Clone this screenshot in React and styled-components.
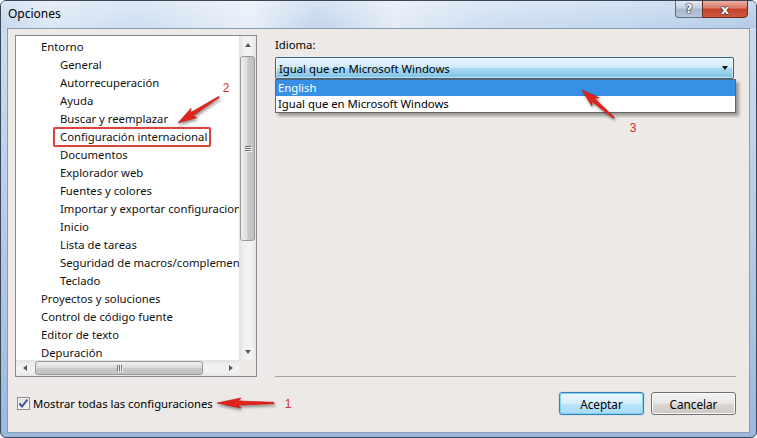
import styled, { createGlobalStyle } from "styled-components";

const GlobalStyle = createGlobalStyle`
  html, body {
    margin: 0;
    padding: 0;
    background: #ffffff;
  }
  body {
    font-family: "Noto Sans", "Open Sans", sans-serif;
    font-size: 11.3px;
    color: #000;
  }
  * {
    box-sizing: border-box;
  }
`;

const TREE = [
  { label: "Entorno", level: 0 },
  { label: "General", level: 1 },
  { label: "Autorrecuperación", level: 1 },
  { label: "Ayuda", level: 1 },
  { label: "Buscar y reemplazar", level: 1 },
  { label: "Configuración internacional", level: 1, marked: true },
  { label: "Documentos", level: 1 },
  { label: "Explorador web", level: 1 },
  { label: "Fuentes y colores", level: 1 },
  { label: "Importar y exportar configuraciones", level: 1 },
  { label: "Inicio", level: 1 },
  { label: "Lista de tareas", level: 1 },
  { label: "Seguridad de macros/complementos", level: 1 },
  { label: "Teclado", level: 1 },
  { label: "Proyectos y soluciones", level: 0 },
  { label: "Control de código fuente", level: 0 },
  { label: "Editor de texto", level: 0 },
  { label: "Depuración", level: 0 },
];

// tapering annotation arrow, tail -> head
const arrowPoints = (x1, y1, x2, y2, head = 18, hw = 5.5) => {
  const len = Math.hypot(x2 - x1, y2 - y1);
  const ux = (x2 - x1) / len;
  const uy = (y2 - y1) / len;
  const px = -uy;
  const py = ux;
  const bx = x2 - ux * head;
  const by = y2 - uy * head;
  const nx = x2 - ux * (head - 3);
  const ny = y2 - uy * (head - 3);
  const pts = [
    [x1 + px * 0.7, y1 + py * 0.7],
    [nx + px * 2, ny + py * 2],
    [bx + px * hw, by + py * hw],
    [x2, y2],
    [bx - px * hw, by - py * hw],
    [nx - px * 2, ny - py * 2],
    [x1 - px * 0.7, y1 - py * 0.7],
  ];
  return pts.map((p) => p.map((v) => v.toFixed(1)).join(",")).join(" ");
};

const App = () => {
  return (
    <>
      <GlobalStyle />
      <Window>
        <TitleBar>
          <Title>Opciones</Title>
          <Caption>
            <HelpButton>?</HelpButton>
            <CloseButton>x</CloseButton>
          </Caption>
        </TitleBar>
        <Client>
          <Main>
            <TreeBox>
              <TreeList>
                {TREE.map((item) => (
                  <TreeRow key={item.label} $level={item.level}>
                    <TreeLabel $marked={item.marked}>{item.label}</TreeLabel>
                  </TreeRow>
                ))}
              </TreeList>
              <VScroll>
                <ScrollButton>
                  <Tri $dir="up" />
                </ScrollButton>
                <VThumb>
                  <Grip $vertical>
                    <i />
                    <i />
                    <i />
                  </Grip>
                </VThumb>
                <ScrollButton $end>
                  <Tri $dir="down" />
                </ScrollButton>
              </VScroll>
              <HScroll>
                <ScrollButton $wide>
                  <Tri $dir="left" />
                </ScrollButton>
                <HThumb>
                  <Grip>
                    <i />
                    <i />
                    <i />
                  </Grip>
                </HThumb>
                <ScrollButton $wide $end>
                  <Tri $dir="right" />
                </ScrollButton>
              </HScroll>
              <Corner />
            </TreeBox>
            <Panel>
              <FieldLabel>Idioma:</FieldLabel>
              <ComboWrap>
                <Combo>
                  <span>Igual que en Microsoft Windows</span>
                  <Tri $dir="down" $dark />
                </Combo>
                <DropList>
                  <Option $selected>English</Option>
                  <Option>Igual que en Microsoft Windows</Option>
                </DropList>
              </ComboWrap>
              <Separator />
            </Panel>
          </Main>
          <Footer>
            <CheckRow>
              <CheckBox>
                <svg width="11" height="11" viewBox="0 0 11 11">
                  <path
                    d="M1.5 5.5 L4 8.5 L9.5 1.5"
                    fill="none"
                    stroke="#3b4f8f"
                    strokeWidth="2"
                  />
                </svg>
              </CheckBox>
              <span>Mostrar todas las configuraciones</span>
            </CheckRow>
            <Buttons>
              <Button $default>Aceptar</Button>
              <Button>Cancelar</Button>
            </Buttons>
          </Footer>
        </Client>
        <Overlay width="757" height="438" viewBox="0 0 757 438">
          <defs>
            <filter id="shadow" x="-20%" y="-50%" width="140%" height="200%">
              <feDropShadow dx="1" dy="2" stdDeviation="1.4" floodColor="#000" floodOpacity="0.45" />
            </filter>
          </defs>
          <g fill="#e2231d" stroke="#b8140f" strokeWidth="0.6" filter="url(#shadow)">
            <polygon points={arrowPoints(274, 403, 217, 403, 24, 5)} />
            <polygon points={arrowPoints(219, 97, 178, 123, 19, 5.5)} />
            <polygon points={arrowPoints(614, 118, 582, 90, 18, 5.5)} />
          </g>
          <g fill="#d8302a" fontSize="12" fontFamily="'Liberation Sans', sans-serif">
            <text x="288" y="408" textAnchor="middle">1</text>
            <text x="226" y="92" textAnchor="middle">2</text>
            <text x="633" y="132" textAnchor="middle">3</text>
          </g>
        </Overlay>
      </Window>
    </>
  );
};

const Window = styled.div`
  position: relative;
  width: 757px;
  height: 438px;
  display: flex;
  flex-direction: column;
  border: 1px solid #3b4656;
  border-radius: 6px;
  background: linear-gradient(180deg, #cddef0 0%, #b4cbe6 55%, #9cb9dd 100%);
  overflow: hidden;
`;

const TitleBar = styled.div`
  height: 27px;
  display: flex;
  align-items: flex-start;
  padding: 0 8px 0 7px;
  background:
    linear-gradient(180deg, rgba(255, 255, 255, 0.3), rgba(255, 255, 255, 0) 100%),
    linear-gradient(
      90deg,
      #c4d8ee 0%,
      #dbe7f5 6%,
      #cddef1 18%,
      #e6eef8 33%,
      #c2d5ec 42%,
      #e2ebf6 52%,
      #cddef1 64%,
      #c3d7ee 82%,
      #b4cbe6 100%
    );
`;

const Title = styled.div`
  font-size: 12px;
  line-height: 26px;
  color: #000;
`;

const Caption = styled.div`
  margin-left: auto;
  display: flex;
  height: 18px;
  margin-top: -1px;
`;

const CaptionButton = styled.div`
  height: 18px;
  display: flex;
  align-items: center;
  justify-content: center;
  color: #fff;
  font-family: "DejaVu Sans", sans-serif;
  font-weight: bold;
  font-size: 12px;
  text-shadow: 0 0 1px #1c2633, 0 0 1px #1c2633, 0 0 2px #1c2633;
`;

const HelpButton = styled(CaptionButton)`
  width: 27px;
  border: 1px solid #5d6b7e;
  border-right: none;
  border-radius: 0 0 0 4px;
  background: linear-gradient(180deg, #e2e9f2 0%, #c4d1df 45%, #a7b8cc 50%, #b8c7d9 100%);
`;

const CloseButton = styled(CaptionButton)`
  width: 46px;
  border: 1px solid #6a2a20;
  border-radius: 0 0 4px 0;
  font-size: 13px;
  background: linear-gradient(180deg, #eab1a4 0%, #d97864 45%, #c5412b 50%, #d2583f 100%);
`;

const Client = styled.div`
  flex: 1;
  margin: 0 6px 4px 6px;
  border: 1px solid #8a9cb2;
  background: #ece9e6;
  padding: 6px 13px 0 7px;
  display: flex;
  flex-direction: column;
`;

const Main = styled.div`
  display: flex;
  gap: 18px;
  height: 342px;
`;

const TreeBox = styled.div`
  width: 242px;
  border: 1px solid #828790;
  background: #fff;
  display: grid;
  grid-template-columns: 1fr 17px;
  grid-template-rows: 1fr 16px;
`;

const TreeList = styled.div`
  overflow: hidden;
  padding-top: 2px;
`;

const TreeRow = styled.div`
  height: 18px;
  line-height: 18px;
  white-space: nowrap;
  padding-left: ${(p) => (p.$level ? 44 : 25)}px;
  color: #111;
`;

const TreeLabel = styled.span`
  position: relative;
  display: inline-block;

  ${(p) =>
    p.$marked &&
    `
    &::after {
      content: "";
      position: absolute;
      top: -1px;
      bottom: -1px;
      left: -7px;
      right: -4px;
      border: 2px solid #d9443d;
      border-radius: 2px;
      box-shadow: 0 0 1px rgba(217, 68, 61, 0.5);
    }
  `}
`;

const VScroll = styled.div`
  display: flex;
  flex-direction: column;
  background: linear-gradient(90deg, #e2e2e2 0%, #f1f1f1 30%, #f3f3f3 70%, #e6e6e6 100%);
`;

const HScroll = styled.div`
  display: flex;
  align-items: stretch;
  background: linear-gradient(180deg, #e2e2e2 0%, #f1f1f1 30%, #f3f3f3 70%, #e6e6e6 100%);
`;

const Corner = styled.div`
  background: #ece9e6;
`;

const ScrollButton = styled.div`
  flex: none;
  display: flex;
  align-items: center;
  justify-content: center;
  ${(p) => (p.$wide ? "width: 17px;" : "height: 17px;")}
  ${(p) => p.$end && "margin-" + (p.$wide ? "left" : "top") + ": auto;"}
`;

const Tri = styled.span`
  width: 0;
  height: 0;
  border-style: solid;
  border-color: transparent;
  ${(p) => {
    const c = p.$dark ? "#111" : "#5a5a5a";
    if (p.$dir === "up") return `border-width: 0 3.5px 4px 3.5px; border-bottom-color: ${c};`;
    if (p.$dir === "down") return `border-width: 4px 3.5px 0 3.5px; border-top-color: ${c};`;
    if (p.$dir === "left") return `border-width: 3.5px 4px 3.5px 0; border-right-color: ${c};`;
    return `border-width: 3.5px 0 3.5px 4px; border-left-color: ${c};`;
  }}
`;

const VThumb = styled.div`
  margin: 3px 1px 0 1px;
  height: 185px;
  border: 1px solid #979797;
  border-radius: 3px;
  background: linear-gradient(90deg, #f1f1f1 0%, #dcdcdc 45%, #c9c9c9 55%, #c2c2c2 100%);
  display: flex;
  align-items: center;
  justify-content: center;
`;

const HThumb = styled.div`
  margin: 1px 0 1px 2px;
  width: 168px;
  border: 1px solid #979797;
  border-radius: 3px;
  background: linear-gradient(180deg, #f1f1f1 0%, #dcdcdc 45%, #c9c9c9 55%, #c2c2c2 100%);
  display: flex;
  align-items: center;
  justify-content: center;
`;

const Grip = styled.div`
  display: flex;
  flex-direction: ${(p) => (p.$vertical ? "column" : "row")};
  gap: 1px;

  i {
    display: block;
    background: #6f6f6f;
    box-shadow: 1px 1px 0 #f4f4f4;
    ${(p) => (p.$vertical ? "width: 6px; height: 1px;" : "width: 1px; height: 6px;")}
  }
`;

const Panel = styled.div`
  flex: 1;
  display: flex;
  flex-direction: column;
  padding-top: 2px;
`;

const FieldLabel = styled.div`
  line-height: 16px;
`;

const ComboWrap = styled.div`
  position: relative;
  margin: 4px 2px 0 0;
`;

const Combo = styled.div`
  height: 22px;
  display: flex;
  align-items: center;
  justify-content: space-between;
  padding: 0 5px 0 3px;
  border: 1px solid #2f6790;
  border-radius: 2px;
  background: linear-gradient(180deg, #e8f5fd 0%, #cfeafa 48%, #a9d9f2 52%, #7fc1e3 100%);
  box-shadow: inset 0 0 0 1px rgba(255, 255, 255, 0.5);
`;

const DropList = styled.div`
  position: absolute;
  top: 100%;
  left: 0;
  right: -2px;
  z-index: 2;
  border: 1px solid #646464;
  background: #fff;
  box-shadow: 3px 3px 3px rgba(0, 0, 0, 0.35);
`;

const Option = styled.div`
  height: 16px;
  line-height: 16px;
  padding-left: 2px;
  white-space: nowrap;
  color: ${(p) => (p.$selected ? "#fff" : "#000")};
  background: ${(p) => (p.$selected ? "#3790e6" : "transparent")};
`;

const Separator = styled.div`
  margin-top: auto;
  border-top: 1px solid #a5a4a2;
`;

const Footer = styled.div`
  display: flex;
  align-items: center;
  padding-top: 15px;
`;

const CheckRow = styled.label`
  display: flex;
  align-items: center;
  gap: 3px;
  margin-left: 2px;
`;

const CheckBox = styled.span`
  width: 13px;
  height: 13px;
  display: flex;
  align-items: center;
  justify-content: center;
  border: 1px solid #8e8f8f;
  background: linear-gradient(135deg, #dcdcdc 0%, #f6f6f6 100%);
  box-shadow: inset 0 0 0 1px #f4f4f4;
`;

const Buttons = styled.div`
  margin-left: auto;
  display: flex;
  gap: 7px;
`;

const Button = styled.div`
  width: 85px;
  height: 23px;
  display: flex;
  align-items: center;
  justify-content: center;
  font-size: 11.7px;
  border-radius: 3px;
  border: 1px solid ${(p) => (p.$default ? "#3c7fb1" : "#707070")};
  background: ${(p) =>
    p.$default
      ? "linear-gradient(180deg, #eaf6fd 0%, #d9f0fc 48%, #bee6fd 52%, #a7d9f5 100%)"
      : "linear-gradient(180deg, #f3f3f3 0%, #e9e8e6 48%, #dbd8d4 52%, #cdc8c3 100%)"};
  box-shadow: ${(p) =>
    p.$default ? "inset 0 0 0 1px #7fd0f5, 0 0 1px #48a6e0" : "inset 0 0 0 1px #fbfbfb"};
`;

const Overlay = styled.svg`
  position: absolute;
  top: -1px;
  left: -1px;
  z-index: 5;
  pointer-events: none;
`;

export default App;
